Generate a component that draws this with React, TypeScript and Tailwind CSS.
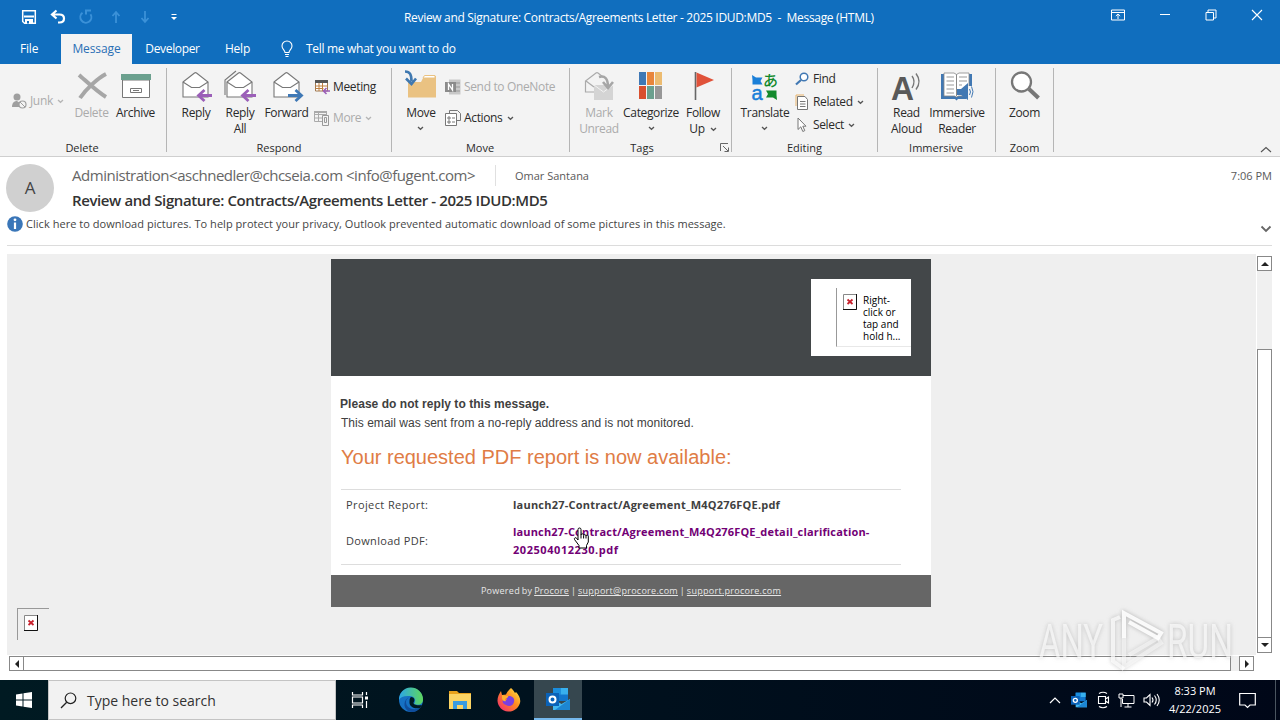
import type { ReactNode } from 'react';
import clsx from 'clsx';

type IconProps = { children: ReactNode; w?: number; h?: number; className?: string };

function Svg({ children, w = 32, h = 32, className }: IconProps) {
  return (
    <svg width={w} height={h} viewBox={`0 0 ${w} ${h}`} fill="none" className={clsx('block shrink-0 overflow-visible', className)}>
      {children}
    </svg>
  );
}

function Caret({ className = 'text-[#555]' }: { className?: string }) {
  return (
    <Svg w={7} h={5} className={className}>
      <path d="M1 1l2.5 2.3L6 1" stroke="currentColor" strokeWidth="1.3" />
    </Svg>
  );
}

/* Quick access toolbar and window controls */

function TitleBar() {
  return (
    <div className="relative flex h-[34px] items-center text-white">
      <Svg w={16} h={16} className="ml-[21px]">
        <path d="M1.7 1.7h12.6v12.6H3.6L1.7 12.5z" stroke="#fff" strokeWidth="1.5" />
        <path d="M3 7.5h10" stroke="#fff" strokeWidth="2" />
        <path d="M4 10h8v4.500H4z" fill="#fff" />
        <path d="M6 12h2v2.500H6z" fill="#106ebe" />
      </Svg>
      <Svg w={16} h={16} className="ml-[13px]">
        <path d="M6.500 1.500L2 5.500l4.500 4M2.500 5.500h7c3 0 4.500 1.800 4.500 4s-1.500 4-4.500 4H8" stroke="#fff" strokeWidth="2.200" />
      </Svg>
      <Svg w={16} h={16} className="ml-[12px]">
        <path d="M4.500 3.800A5.500 5.500 0 1 0 12.500 5.200M8 5.500V1.500h5" stroke="#3b91d8" strokeWidth="2" />
      </Svg>
      <Svg w={16} h={16} className="ml-[14px]">
        <path d="M8 14V3M4.500 7L8 3l3.500 4" stroke="#3b91d8" strokeWidth="1.800" />
      </Svg>
      <Svg w={16} h={16} className="ml-[13px]">
        <path d="M8 2v11M4.500 9L8 13l3.500-4" stroke="#3b91d8" strokeWidth="1.800" />
      </Svg>
      <Svg w={8} h={8} className="ml-[17px]">
        <path d="M1.500 1.500h5" stroke="#fff" />
        <path d="M1 4h6L4 7z" fill="#fff" />
      </Svg>
      <div className="absolute left-[404px] top-[9px] text-[12px] leading-[17px] tracking-[-0.315px] whitespace-pre">
        Review and Signature: Contracts/Agreements Letter - 2025 IDUD:MD5  -  Message (HTML)
      </div>
      <div className="ml-auto mr-[17px] mb-[4px] flex items-center gap-[34px]">
        <Svg w={14} h={12}>
          <path d="M.5 1h13v10H.5zM.5 3.500h13M7 10V5M4.800 7L7 5l2.200 2" stroke="#fff" />
        </Svg>
        <Svg w={12} h={12}>
          <path d="M1 5.500h10" stroke="#fff" />
        </Svg>
        <Svg w={12} h={12}>
          <path d="M1 3.500h7.500V11H1zM3 3.500V1h8v8H8.500" stroke="#fff" />
        </Svg>
        <Svg w={12} h={12}>
          <path d="M1 1l10 10M11 1L1 11" stroke="#fff" strokeWidth="1.100" />
        </Svg>
      </div>
    </div>
  );
}

function Tabs() {
  return (
    <div className="flex h-[30px] text-[12px] leading-[30px] text-white">
      <div className="w-[61px] pl-[20px] tracking-[-0.2px]">File</div>
      <div className="w-[71px] bg-[#f3f3f3] text-center tracking-[-0.1px] text-[#2a6fb5]">Message</div>
      <div className="w-[81px] text-center tracking-[-0.35px]">Developer</div>
      <div className="w-[49px] text-center tracking-[-0.2px]">Help</div>
      <Svg w={14} h={18} className="ml-[18px] mt-[6px]">
        <path d="M5 12.500c0-2-3-3.500-3-6.500a5 5 0 0 1 10 0c0 3-3 4.500-3 6.500zM5 14.500h4M5.500 16.500h3" stroke="#fff" strokeWidth="1.100" />
      </Svg>
      <div className="ml-[12px] tracking-[-0.3px]">Tell me what you want to do</div>
    </div>
  );
}

/* Ribbon */

function Group({ label, className, corner, children }: { label: string; className: string; corner?: boolean; children: ReactNode }) {
  return (
    <div className={clsx('relative flex h-[92px] shrink-0 flex-col', className)}>
      <div className="flex h-[76px] items-start">{children}</div>
      <div className="text-center text-[11px] leading-[16px]">{label}</div>
      {corner && (
        <Svg w={9} h={9} className="absolute right-[3px] bottom-[4px]">
          <path d="M.5 8V.5H8M3 3l5 5M8.500 4.500v4h-4" stroke="#666" />
        </Svg>
      )}
      <div className="absolute top-[4px] right-0 h-[84px] w-px bg-[#b5b5b5]" />
    </div>
  );
}

type BigProps = { icon: ReactNode; lines: string[]; className: string; disabled?: boolean; caret?: 'below' | 'inline' };

function BigButton({ icon, lines, className, disabled, caret }: BigProps) {
  return (
    <div className={clsx('flex shrink-0 flex-col items-center pt-[6px]', className, disabled && 'text-[#ababab]')}>
      {icon}
      <div className="mt-[3px] flex flex-col items-center text-[12px] leading-[16px] tracking-[-0.35px] whitespace-nowrap">
        {lines.map((line, i) => (
          <div key={line} className="flex items-center gap-[5px]">
            {line}
            {caret === 'inline' && i === lines.length - 1 && <Caret />}
          </div>
        ))}
        {caret === 'below' && <Caret className="mt-[5px] text-[#555]" />}
      </div>
    </div>
  );
}

function SmallButton({ icon, label, caret, disabled, className }: { icon: ReactNode; label: string; caret?: boolean; disabled?: boolean; className?: string }) {
  return (
    <div className={clsx('flex items-center text-[12px] leading-[16px] tracking-[-0.35px] whitespace-nowrap', disabled && 'text-[#ababab]', className)}>
      {icon}
      <span className="ml-[3px]">{label}</span>
      {caret && <Caret className={clsx('ml-[4px]', disabled ? 'text-[#b5b5b5]' : 'text-[#555]')} />}
    </div>
  );
}

function Envelope() {
  return (
    <>
      <path d="M3 12L14.500 3q1-.7 2 0L28 12v15H3z" fill="#fff" stroke="#777" strokeWidth="1.100" />
      <path d="M3 12l8.500 5.500h8L28 12" stroke="#777" strokeWidth="1.100" />
    </>
  );
}

const replyArrow = <path d="M32 25.500H18M24.500 20l-6 5.500 6 5.500" stroke="#9b5fb8" strokeWidth="2.800" />;

function DeleteIcon() {
  return (
    <Svg>
      <path d="M3 5c6 5 17 16 27 22M30 4C22 8 10 19 4 28" stroke="#a6a6a6" strokeWidth="4" />
    </Svg>
  );
}

function ArchiveIcon() {
  return (
    <Svg>
      <path d="M2.500 10h27v17.500h-27z" fill="#fff" stroke="#777" />
      <path d="M1 4h30v6H1z" fill="#6ba08e" />
      <path d="M10.500 18.500h11v4h-11zM13 20.500h6" stroke="#777" />
    </Svg>
  );
}

function MoveIcon() {
  return (
    <Svg>
      <path d="M3 12h13l3-6h12v21.500H3z" fill="#eac282" />
      <path d="M18 8l1.500-2.500H30V8z" fill="#fff" stroke="#eac282" />
      <path d="M0 1.500c5 0 6.500 3 6.500 10M1 8.500L6.500 14 11 8.500" stroke="#3f78b0" strokeWidth="2.600" />
    </Svg>
  );
}

function MarkUnreadIcon() {
  return (
    <Svg>
      <path d="M11 22H2.500V11L13 3q1-.7 2 0l5 4M3 11l8 6" fill="none" stroke="#aaa" strokeWidth="1.200" />
      <path d="M11 15h19v15H11z" fill="#d4d4d4" />
      <path d="M11 15l9.500 7 9.500-7" stroke="#f3f3f3" />
      <path d="M16 7c6-2 9 2 9 10M20 12l5 6 5-6" stroke="#a6a6a6" strokeWidth="2.600" />
    </Svg>
  );
}

function CategorizeIcon() {
  return (
    <Svg>
      <path d="M4 2h7v13H4z" fill="#3f78b5" />
      <path d="M12 2h7v13h-7z" fill="#e8853b" />
      <path d="M20 2h7v13h-7z" fill="#ecbb70" />
      <path d="M4 16h7v13H4z" fill="#d9502f" />
      <path d="M12 16h7v13h-7z" fill="#6ba08e" />
      <path d="M20 16h7v13h-7z" fill="#979797" />
    </Svg>
  );
}

function FlagIcon() {
  return (
    <Svg>
      <path d="M8.500 2v28" stroke="#666" strokeWidth="1.600" />
      <path d="M9.500 2.500L27 10 9.500 17.500z" fill="#e0523a" />
    </Svg>
  );
}

function TranslateIcon() {
  return (
    <Svg>
      <path d="M3 5l4 2.500h6.500l-2 3.500 2 3.500h-10v-4.500z" fill="#1a7fd8" />
      <path d="M28 30l-4-2.500h-7l2-3.500-2-3.500h10.500v4.500z" fill="#138a2c" />
      <text x="2.500" y="29.500" fontSize="20" fill="#1a7fd8" stroke="#1a7fd8" strokeWidth=".5" fontFamily="Liberation Sans, sans-serif">a</text>
      <text x="14" y="15.500" fontSize="15" fontWeight="500" fill="#138a2c" fontFamily="Noto Sans CJK JP, sans-serif">あ</text>
    </Svg>
  );
}

function ReadAloudIcon() {
  return (
    <Svg>
      <text x="0" y="29.500" fontSize="33" fontWeight="bold" fill="#595959" textLength="23" lengthAdjust="spacingAndGlyphs" fontFamily="Liberation Sans, sans-serif">A</text>
      <path d="M21 6q4 5 0 12M25 3.500q6 8 0 16" stroke="#777" strokeWidth="1.400" />
    </Svg>
  );
}

function ReaderIcon() {
  return (
    <Svg>
      <path d="M0 4h31v25H17l-1.500 1.500L14 29H0z" fill="#4178b3" />
      <path d="M3 3h10l2.500 1.500L18 3h10v23H17.500l-2 1-2-1H3z" fill="#fff" stroke="#888" strokeWidth=".8" />
      <path d="M15.500 4.500V26" stroke="#888" />
      <path d="M5.500 7H13M5.500 11H13M5.500 15H13M5.500 19H13M5.500 23H13M18 7h8M18 11h8M18 15h3" stroke="#999" />
      <path d="M25 16h7v15h-7z" fill="#f3f3f3" />
      <path d="M16 19h4l7-6v17l-7-5h-4z" fill="#4178b3" />
      <path d="M28.500 19q2 3 0 6M30.500 16.500q3 5 0 11" stroke="#4178b3" />
    </Svg>
  );
}

function ZoomIcon() {
  return (
    <Svg>
      <path d="M20 19l9.500 9" stroke="#777" strokeWidth="4" />
      <circle cx="12.500" cy="12" r="9.500" fill="#fff" stroke="#777" strokeWidth="2.300" />
    </Svg>
  );
}

function Ribbon() {
  return (
    <div className="flex h-[93px] shrink-0 border-b border-[#cfcfcf] bg-[#f3f3f3] text-[#2a2a2a]">
      <Group label="Delete" className="w-[167px] pr-[3px]">
        <SmallButton
          className="ml-[11px] mt-[29px] w-[60px]"
          disabled
          caret
          label="Junk"
          icon={
            <Svg w={16} h={16}>
              <circle cx="6" cy="4" r="3.500" fill="#9f9f9f" />
              <path d="M1 14c0-4 2-6 5-6l3 2-1 4z" fill="#9f9f9f" />
              <circle cx="11.500" cy="11.500" r="3.500" fill="#f3f3f3" stroke="#9f9f9f" strokeWidth="1.200" />
              <path d="M9 9l5 5" stroke="#9f9f9f" />
            </Svg>
          }
        />
        <BigButton className="w-[41px]" disabled lines={['Delete']} icon={<DeleteIcon />} />
        <BigButton className="w-[47px]" lines={['Archive']} icon={<ArchiveIcon />} />
      </Group>

      <Group label="Respond" className="w-[225px] pr-px">
        <BigButton className="ml-[7px] w-[44px]" lines={['Reply']} icon={<Svg><Envelope />{replyArrow}</Svg>} />
        <BigButton
          className="w-[44px]"
          lines={['Reply', 'All']}
          icon={
            <Svg>
              <path d="M1 25V10L12 1" stroke="#777" strokeWidth="1.100" />
              <Envelope />
              {replyArrow}
            </Svg>
          }
        />
        <BigButton
          className="w-[49px]"
          lines={['Forward']}
          icon={<Svg><Envelope /><path d="M17 25.500h13M24.500 20l6 5.500-6 5.500" stroke="#3f78b5" strokeWidth="2.800" /></Svg>}
        />
        <div className="ml-[3px] mt-[15px] flex flex-col gap-[15px]">
          <SmallButton
            label="Meeting"
            className="tracking-[-0.25px]"
            icon={
              <Svg w={16} h={16}>
                <path d="M1.500 2h12v10h-12z" fill="#fff" stroke="#a07850" />
                <path d="M1 1h13v3H1z" fill="#555" />
                <path d="M1.500 7h12M1.500 9.500h8M5 4v8M8.500 4v8" stroke="#c08040" />
                <path d="M16 12h-6M12.500 9L9.500 12l3 3" stroke="#9b5fb8" strokeWidth="1.600" />
              </Svg>
            }
          />
          <SmallButton
            label="More"
            disabled
            caret
            icon={
              <Svg w={16} h={16}>
                <path d="M.5 1.500h12v10H.5zM.5 4.500h12M.5 8h8M4.500 3v8" stroke="#aaa" />
                <path d="M0 1h13v2H0z" fill="#aaa" />
                <path d="M8.500 5.500h6v10h-6z" fill="#f3f3f3" stroke="#999" />
                <path d="M10.500 7.500h2v5h-2z" stroke="#999" />
              </Svg>
            }
          />
        </div>
      </Group>

      <Group label="Move" className="w-[178px] pr-[2px]">
        <BigButton className="ml-[8px] w-[42px]" lines={['Move']} caret="below" icon={<MoveIcon />} />
        <div className="ml-[3px] mt-[15px] flex flex-col gap-[15px]">
          <SmallButton
            label="Send to OneNote"
            disabled
            icon={
              <Svg w={16} h={16}>
                <path d="M4 .5h11.500v15H4z" fill="#c8c8c8" />
                <path d="M11 4h4M11 8h4M11 12h4" stroke="#999" />
                <path d="M0 3h11v10H0z" fill="#8b8b8b" />
                <path d="M3.500 11V5l4 6V5" stroke="#fff" strokeWidth="1.300" />
              </Svg>
            }
          />
          <SmallButton
            label="Actions"
            caret
            icon={
              <Svg w={16} h={16}>
                <path d="M4.500 3V.5h8l3 3v7H12" stroke="#777" />
                <path d="M.5 3.500h11v12H.5z" fill="#fff" stroke="#777" />
                <path d="M3 7h2v2H3zM3 11h2v2H3zM7 8h3M7 12h3" stroke="#777" />
              </Svg>
            }
          />
        </div>
      </Group>

      <Group label="Tags" className="w-[162px] pr-[18px]" corner>
        <BigButton className="ml-[7px] w-[44px]" disabled lines={['Mark', 'Unread']} icon={<MarkUnreadIcon />} />
        <BigButton className="w-[60px]" lines={['Categorize']} caret="below" icon={<CategorizeIcon />} />
        <BigButton className="w-[44px]" lines={['Follow', 'Up']} caret="inline" icon={<FlagIcon />} />
      </Group>

      <Group label="Editing" className="w-[146px] pr-px">
        <BigButton className="ml-[8px] w-[50px]" lines={['Translate']} caret="below" icon={<TranslateIcon />} />
        <div className="ml-[5px] mt-[7px] flex flex-col gap-[7px]">
          <SmallButton
            label="Find"
            icon={
              <Svg w={15} h={14}>
                <circle cx="9" cy="5" r="3.800" fill="#fff" stroke="#4178b3" strokeWidth="1.500" />
                <path d="M6 8l-5 4.500" stroke="#4178b3" strokeWidth="2.200" />
              </Svg>
            }
          />
          <SmallButton
            label="Related"
            caret
            icon={
              <Svg w={15} h={16}>
                <path d="M1 12V1h8" stroke="#e8b36a" />
                <path d="M2.500 2.500H10l2.500 3v10h-10z" fill="#fff" stroke="#777" />
                <path d="M5 7.500h5.500M5 10h5.500M5 12.500h5.500" stroke="#777" />
              </Svg>
            }
          />
          <SmallButton
            label="Select"
            caret
            icon={
              <Svg w={15} h={16}>
                <path d="M3 1v11.500l2.800-2.700 2 4.700 2-.9-2-4.400H11z" fill="#fff" stroke="#777" />
              </Svg>
            }
          />
        </div>
      </Group>

      <Group label="Immersive" className="w-[118px] pr-[2px]">
        <BigButton className="ml-[7px] w-[43px]" lines={['Read', 'Aloud']} icon={<ReadAloudIcon />} />
        <BigButton className="w-[58px]" lines={['Immersive', 'Reader']} icon={<ReaderIcon />} />
      </Group>

      <Group label="Zoom" className="w-[58px] pr-px">
        <BigButton className="w-[57px]" lines={['Zoom']} icon={<ZoomIcon />} />
      </Group>

      <Svg w={12} h={7} className="ml-auto mr-[8px] mt-[82px]">
        <path d="M1 6l5-4.500L11 6" stroke="#555" strokeWidth="1.100" />
      </Svg>
    </div>
  );
}

/* Message header */

function MessageHeader() {
  return (
    <div className="mr-[8px] ml-[7px] flex h-[89px] shrink-0 flex-col border-b border-[#dcdcdc] text-[#444]">
      <div className="flex h-[57px]">
        <div className="-ml-px mt-[7px] flex size-[48px] items-center justify-center rounded-full bg-[#d0d0d0] text-[17px]">A</div>
        <div className="ml-[18px] mt-[8px] flex-1">
          <div className="flex h-[21px] items-center">
            <span className="w-[424px] border-r border-[#e0e0e0] text-[15px] leading-[21px] tracking-[-0.47px] whitespace-nowrap text-[#666]">
              Administration&lt;aschnedler@chcseia.com &lt;info@fugent.com&gt;
            </span>
            <span className="ml-[19px] mt-px text-[11px] text-[#595959]">Omar Santana</span>
            <span className="mt-px ml-auto text-[11px] text-[#595959]">7:06 PM</span>
          </div>
          <div className="mt-[3px] text-[15px] font-semibold leading-[22px] tracking-[-0.4px] whitespace-nowrap text-[#333]">
            Review and Signature: Contracts/Agreements Letter - 2025 IDUD:MD5
          </div>
        </div>
      </div>
      <div className="flex items-center h-[20px]">
        <Svg w={16} h={16}>
          <circle cx="8" cy="8" r="7.800" fill="#3a76b8" />
          <path d="M8 6.500v6.500" stroke="#fff" strokeWidth="2.200" />
          <circle cx="8" cy="3.800" r="1.400" fill="#fff" />
        </Svg>
        <span className="ml-[3px] text-[11px] tracking-[0.042px] whitespace-nowrap">
          Click here to download pictures. To help protect your privacy, Outlook prevented automatic download of some pictures in this message.
        </span>
        <Svg w={12} h={8} className="ml-auto mt-[10px]">
          <path d="M1.500 1.500L6 6l4.500-4.500" stroke="#666" strokeWidth="1.800" />
        </Svg>
      </div>
    </div>
  );
}

function BrokenImage({ className }: { className?: string }) {
  return (
    <Svg w={14} h={16} className={className}>
      <path d="M.5.5h13v15H.5z" fill="#fff" stroke="#888" />
      <path d="M13.500 0v15.500H0" stroke="#111" />
      <path d="M4.500 5.500l5 4.500M9.500 5.500l-5 4.500" stroke="#c8202c" strokeWidth="1.800" />
    </Svg>
  );
}

function HandCursor() {
  return (
    <Svg w={18} h={24} className="absolute left-[242px] top-[267px]">
      <path
        d="M5 14V3.500a1.500 1.500 0 0 1 3 0V9a1.300 1.300 0 0 1 2.600.3 1.300 1.300 0 0 1 2.400.7 1.200 1.200 0 0 1 2.300.8V16l-1.800 3.500V22H6v-2.500L1.500 13.500c-.6-1.500 1-2.500 2.200-1.200z"
        fill="#fff"
        stroke="#000"
      />
      <path d="M8 9v3.500M10.600 9.500v3M13 10v2.500" stroke="#000" />
    </Svg>
  );
}

function Email() {
  return (
    <div className="relative h-[348px] w-[600px] bg-white font-['Liberation_Sans',Arial,sans-serif] text-[#404040]">
      <div className="flex h-[117px] justify-end bg-[#434749] pr-[20px] pt-[20px]">
        <div className="h-[77px] w-[100px] bg-white pl-[25px] pt-[9px]">
          <div className="flex h-[59px] border-l border-b border-l-[#999] border-b-[#e8e8e8] pl-[6px] pt-[6px]">
            <BrokenImage />
            <div className="ml-[6px] font-['Open_Sans',sans-serif] text-[10px] leading-[12px] whitespace-nowrap text-black">
              Right-<br />click or<br />tap and<br />hold h...
            </div>
          </div>
        </div>
      </div>
      <div className="h-[199px] pl-[10px] pt-[19px]">
        <div className="-ml-px text-[12px] font-bold leading-[19px] tracking-[0.05px]">Please do not reply to this message.</div>
        <div className="text-[12px] leading-[19px] tracking-[0.03px]">This email was sent from a no-reply address and is not monitored.</div>
        <div className="mt-[11px] text-[20px] leading-[26px] text-[#e07c45]">Your requested PDF report is now available:</div>
        <div className="mt-[19px] grid h-[76px] w-[560px] grid-cols-[167px_1fr] grid-rows-[31px_41px] items-center border-y border-[#ddd] pl-[5px] font-['Open_Sans',sans-serif] text-[11px]">
          <div className="tracking-[0.4px]">Project Report:</div>
          <div className="font-bold tracking-[0.22px]">launch27-Contract/Agreement_M4Q276FQE.pdf</div>
          <div className="tracking-[0.32px]">Download PDF:</div>
          <div className="pb-[2px] font-bold leading-[18px] tracking-[0.16px] text-[#720075]">
            launch27-Contract/Agreement_M4Q276FQE_detail_clarification-<br />
            <span className="tracking-[0.55px]">202504012230.pdf</span>
          </div>
        </div>
      </div>
      <div className="h-[32px] bg-[#666] text-center font-['Open_Sans',sans-serif] text-[9px] leading-[32px] tracking-[0.28px] [word-spacing:-0.8px] text-[#e6e6e6]">
        Powered by <u>Procore</u> | <u>support@procore.com</u> | <u>support.procore.com</u>
      </div>
      <HandCursor />
    </div>
  );
}

function ScrollButton({ d, className }: { d: string; className: string }) {
  return (
    <div className={clsx('flex shrink-0 items-center justify-center border border-[#888] bg-white', className)}>
      <Svg w={8} h={8}>
        <path d={d} fill="#222" />
      </Svg>
    </div>
  );
}

function Watermark() {
  return (
    <svg
      width="200"
      height="66"
      viewBox="0 0 200 66"
      className="absolute left-[1036px] top-[608px] overflow-visible drop-shadow-[0_0_2px_rgba(120,120,120,0.55)]"
      fill="none"
    >
      <g fill="#fff" fillOpacity=".65" fontFamily="Roboto, sans-serif" fontSize="49">
        <text x="3" y="49.500" textLength="64" lengthAdjust="spacingAndGlyphs">ANY</text>
        <text x="131" y="49.500" textLength="66" lengthAdjust="spacingAndGlyphs">RUN</text>
      </g>
      <path d="M84 9l-7 3v41l11 8" stroke="#fff" strokeOpacity=".7" strokeWidth="4" />
      <path d="M88 30V5l37 20-3 5-29-16" stroke="#fff" strokeOpacity=".9" strokeWidth="4" />
      <path d="M88 30v29l37-24-3-5-29 17" stroke="#fff" strokeOpacity=".5" strokeWidth="4" />
    </svg>
  );
}

/* Taskbar */

function OutlookIcon({ size }: { size: number }) {
  return (
    <svg width={size} height={size} viewBox="0 0 24 24" className="block">
      <path d="M7 1h15v13H7z" fill="#1276cd" />
      <path d="M14.500 1H22v6.500h-7.500z" fill="#38b0ee" />
      <path d="M7 1h7.500v6.500H7z" fill="#1a8ddd" />
      <path d="M7 12l8.500 5 8.500-5v11H7z" fill="#42b8f0" />
      <path d="M24 12v11H9z" fill="#1d86d2" />
      <path d="M0 6h13v13H0z" fill="#0a62b8" />
      <circle cx="6.500" cy="12.500" r="3" fill="none" stroke="#fff" strokeWidth="2" />
    </svg>
  );
}

function Taskbar() {
  return (
    <div className="flex h-[40px] shrink-0 items-center bg-linear-to-r from-[#001a22] to-[#000718] text-white">
      <div className="flex w-[48px] justify-center">
        <Svg w={16} h={16}>
          <path d="M0 2.500l6.500-1V7.500H0zM7.500 1.300L16 0v7.500H7.500zM0 8.500h6.500v6L0 13.500zM7.500 8.500H16V16l-8.500-1.300z" fill="#fff" />
        </Svg>
      </div>
      <div className="flex h-[40px] w-[288px] items-center border border-[#c4c4c4] bg-[#f2f2f2] pl-[11px]">
        <Svg w={17} h={17}>
          <circle cx="10.500" cy="6.300" r="5.300" stroke="#222" strokeWidth="1.200" />
          <path d="M6.700 10.200L1 16" stroke="#222" strokeWidth="1.300" />
        </Svg>
        <span className="ml-[10px] text-[14px] whitespace-nowrap text-[#333]">Type here to search</span>
      </div>
      <Svg w={18} h={18} className="ml-[15px]">
        <path d="M1.500 1v3h10V1M1.500 17v-3h10v3M1.500 6h10v6h-10zM15.500 1v3M15.500 10v7" stroke="#fff" strokeWidth="1.200" />
        <path d="M14 5.500h3v3h-3z" fill="#fff" />
      </Svg>
      <Svg w={24} h={24} className="ml-[30px]">
        <defs>
          <linearGradient id="edge-top" x1="0" x2="1">
            <stop stopColor="#2ba6e8" />
            <stop offset="1" stopColor="#5fd75c" />
          </linearGradient>
        </defs>
        <circle cx="12" cy="12" r="12" fill="#1671c4" />
        <path d="M0 12A12 12 0 0 1 24 11c.3 5-4 7-9 5 3-4 0-8-4-8-6-.500-9.500 1-11 4z" fill="url(#edge-top)" />
        <path d="M7 14c0 6 7 9 14 6-3 4-8 5-12 3-5-3-5-12 2-14-3 1-4 3-4 5z" fill="#0f4d9c" />
        <path d="M12 9c3 0 4.500 3 2.500 5.500-.5 2 3 3.500 8.500 2.500l-2 3c-6 1-10-1-10.500-5 0-3 0-5 1.500-6z" fill="#001a22" />
      </Svg>
      <Svg w={22} h={20} className="ml-[26px]">
        <path d="M0 1h8l2 2h12v4H0z" fill="#e8a21c" />
        <path d="M0 4h22v15H0z" fill="#fbd464" />
        <path d="M4 11h14v8h-4v-4H8v4H4z" fill="#3a9be0" />
      </Svg>
      <Svg w={24} h={24} className="ml-[26px]">
        <defs>
          <linearGradient id="fox" x1="1" y1="0" x2="0" y2="1">
            <stop stopColor="#fff04a" />
            <stop offset=".45" stopColor="#ff8a1f" />
            <stop offset="1" stopColor="#f0207a" />
          </linearGradient>
        </defs>
        <path d="M14 0c2 2 3 3 4 5l1-1c3 3 5 7 4 11-2 6-7 9-12 8.500C5 23 1 18.500.5 13 .4 9 2 6 4 3l1 4 4-.5C10 4 12 2 14 0z" fill="url(#fox)" />
        <path d="M9 9l3-1c3 0 6 2 5 6s-5 5-8 3c-3-1-4-3-3-5l4 0z" fill="#7a3fe0" />
        <path d="M5 7l6 1c1 1-1 2-3 3l1 2c-2 1-4-1-4-3z" fill="#ffb02e" />
      </Svg>
      <div className="ml-[13px] flex h-[40px] w-[48px] items-center justify-center border-b-2 border-[#76b9ed] bg-[#36474f]">
        <OutlookIcon size={24} />
      </div>

      <div className="ml-auto flex h-full items-center">
        <Svg w={12} h={8}>
          <path d="M1 7l5-5 5 5" stroke="#fff" strokeWidth="1.200" />
        </Svg>
        <div className="ml-[10px]">
          <OutlookIcon size={16} />
        </div>
        <Svg w={14} h={18} className="ml-[9px]">
          <path d="M2.500 5.500h7v7h-7zM9.500 8l3-2v6l-3-2M3 2.500q4-2.500 8 0M3 15.500q4 2.500 8 0" stroke="#fff" strokeWidth="1.100" />
        </Svg>
        <Svg w={17} h={16} className="ml-[8px]">
          <path d="M5 3.500h11v8H4.500V7M10 11.500V15M6.500 15h7M1 2h4v4H1zM3 6v9" stroke="#fff" />
        </Svg>
        <Svg w={17} h={16} className="ml-[8px]">
          <path d="M1 6h2.500L7 2.500v11L3.500 10H1zM9 5.500q2 2.500 0 5M11.500 3.500q3.500 4.500 0 9M14 2q4.500 6 0 12" stroke="#fff" strokeWidth="1.100" />
        </Svg>
        <div className="ml-[8px] w-[54px] text-center text-[11px] leading-[18px] whitespace-nowrap">
          8:33 PM<br />4/22/2025
        </div>
        <Svg w={17} h={17} className="ml-[17px] mr-[19px]">
          <path d="M.7 1.500h15.600v11.500H11l-2.500 2.500L6 13H.7z" stroke="#fff" strokeWidth="1.200" />
        </Svg>
        <div className="mr-[4px] h-full w-px bg-[#4a5560]" />
      </div>
    </div>
  );
}

export default function App() {
  return (
    <div className="relative flex h-[720px] w-[1280px] flex-col overflow-hidden bg-white font-['Open_Sans','Noto_Sans',sans-serif]">
      <div className="shrink-0 bg-[#106ebe]">
        <TitleBar />
        <Tabs />
      </div>
      <Ribbon />
      <MessageHeader />

      <div className="ml-[7px] mr-[8px] mt-[8px] flex h-[401px] shrink-0">
        <div className="flex w-[1249px] bg-[#efefef] pt-[5px]">
          <div className="mt-[349px] ml-[10px] h-[32px] w-[32px] shrink-0 border-l border-t border-[#999] pl-[6px] pt-[6px]">
            <BrokenImage />
          </div>
          <div className="ml-[282px]">
            <Email />
          </div>
        </div>
        <div className="mb-[2px] ml-px mt-[2px] flex w-[15px] flex-col bg-[#f0f0f0]">
          <ScrollButton className="h-[15px]" d="M0 6l4-4 4 4z" />
          <div className="mt-[78px] flex-1 border border-b-0 border-[#888] bg-white" />
          <ScrollButton className="h-[16px]" d="M0 2l4 4 4-4z" />
        </div>
      </div>
      <div className="ml-[9px] mt-px flex h-[15px] w-[1245px] shrink-0 bg-[#f0f0f0]">
        <ScrollButton className="w-[15px]" d="M6 0L2 4l4 4z" />
        <div className="w-[1207px] border border-l-0 border-[#888] bg-white" />
        <ScrollButton className="ml-auto w-[15px]" d="M2 0l4 4-4 4z" />
      </div>
      <div className="mt-auto">
        <Taskbar />
      </div>
      <Watermark />
    </div>
  );
}
